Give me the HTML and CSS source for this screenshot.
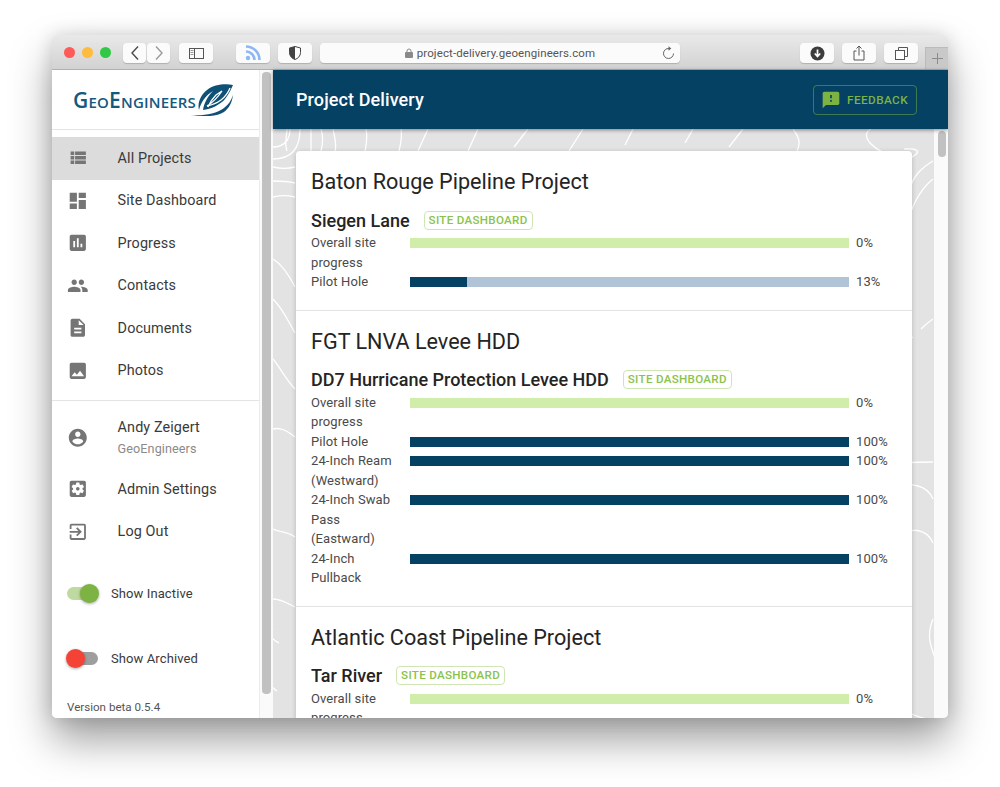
FILE: index.html
```html
<!DOCTYPE html>
<html lang="en">
<head>
    <meta charset="UTF-8">
    <title>Project Delivery</title>
    <link rel="stylesheet" href="styles.css">
</head>
<body>

    <div class="window">
        <div class="toolbar">
            <div class="lights">
                <span class="light red"></span>
                <span class="light yellow"></span>
                <span class="light green"></span>
            </div>
            <div class="tb-btn nav-btn"><svg width="10" height="16" viewBox="0 0 10 16"><path d="M8 1.5L2 8l6 6.5" fill="none" stroke="#4a4a4a" stroke-width="1.4"/></svg></div>
            <div class="tb-btn nav-btn next"><svg width="10" height="16" viewBox="0 0 10 16"><path d="M2 1.5L8 8l-6 6.5" fill="none" stroke="#9a9a9a" stroke-width="1.4"/></svg></div>
            <div class="tb-btn wide sidebar-btn"><svg width="15" height="11" viewBox="0 0 15 11"><rect x=".5" y=".5" width="14" height="10" fill="none" stroke="#555"/><path d="M5.5 0v11" stroke="#555"/><path d="M1.5 2.5h3M1.5 4.5h3M1.5 6.5h3" stroke="#999"/></svg></div>
            <div class="tb-btn wide rss-btn"><svg width="16" height="16" viewBox="0 0 16 16"><circle cx="3" cy="13" r="2.2" fill="#8db8f5"/><path d="M1 6.5a8.5 8.5 0 0 1 8.500 8.500M1 1.500a13.500 13.500 0 0 1 13.500 13.500" fill="none" stroke="#8db8f5" stroke-width="2.600"/></svg></div>
            <div class="tb-btn wide shield-btn"><svg width="12" height="14" viewBox="0 0 12 14"><path d="M6 .5l5.500 1.500v4.500c0 3.500-2.500 6-5.500 7-3-1-5.500-3.500-5.500-7V2z" fill="#fff" stroke="#444"/><path d="M6 .5L.5 2v4.500c0 3.500 2.500 6 5.500 7z" fill="#444"/></svg></div>
            <div class="url-bar">
                <span class="url-text"><svg width="8" height="10" viewBox="0 0 8 10"><path d="M2 4.500V3a2 2 0 0 1 4 0v1.500" fill="none" stroke="#8a8a8a"/><rect y="4" width="8" height="6" rx="1" fill="#8a8a8a"/></svg> project-delivery.geoengineers.com</span>
                <svg class="reload" width="13" height="14" viewBox="0 0 13 14"><path d="M7 2.500A5 5 0 1 0 11.500 7.500" fill="none" stroke="#666"/><path d="M6.500 .3L9.300 2.500 6.500 4.700z" fill="#666"/></svg>
            </div>
            <div class="tb-btn wide download-btn"><svg width="15" height="15" viewBox="0 0 15 15"><circle cx="7.500" cy="7.500" r="7" fill="#3c3c3c"/><path d="M7.500 3.500v6M4.800 7.500l2.700 3 2.700-3" fill="none" stroke="#fff" stroke-width="1.700"/></svg></div>
            <div class="tb-btn wide"><svg width="12" height="16" viewBox="0 0 12 16"><path d="M3.500 6H1v9h10V6H8.500M6 10.500V1M3.500 3.500L6 1l2.500 2.500" fill="none" stroke="#555"/></svg></div>
            <div class="tb-btn wide"><svg width="13" height="13" viewBox="0 0 13 13"><rect x=".5" y="3.500" width="9" height="9" fill="#fff" stroke="#555"/><path d="M3.500 3.500v-3h9v9h-3" fill="none" stroke="#555"/></svg></div>
            <div class="new-tab"><svg width="11" height="11" viewBox="0 0 11 11"><path d="M5.500 0v11M0 5.500h11" stroke="#8c8c8c"/></svg></div>
        </div>

        <div class="app">
            <aside class="sidebar">
                <div class="logo">
                    <span class="logo-text">GeoEngineers</span>
                    <svg class="logo-leaf" width="46" height="32" viewBox="0 0 46 32">
                        <path d="M43 1C35-.5 24 .5 17 6 9.500 12 7.500 20 9 26c2-8 7-15 14-19-5 5-9 12-10 19 8-1 17-5 22-11 4-5 6-10 8-14z" fill="#0f5176"/>
                        <path d="M40 4c-2 5-5 9-9 12-4 3-9 5-14 6 5-3 11-9 15-15l-6 4c-3 3-6 7-8 12" fill="none" stroke="#fff" stroke-width="1.300"/>
                        <path d="M0 31c14 1 26-1 34-7 4-3 7-7 9-13-1 8-4 13-9 17-8 5-22 5-34 3z" fill="#0f5176"/>
                    </svg>
                </div>
                <ul class="menu first">
                    <li class="menu-item active"><svg class="icon" viewBox="0 0 24 24"><path d="M4 14h4v-4H4v4zm0 5h4v-4H4v4zM4 9h4V5H4v4zm5 5h12v-4H9v4zm0 5h12v-4H9v4zM9 5v4h12V5H9z"/></svg>All Projects</li>
                    <li class="menu-item"><svg class="icon" viewBox="0 0 24 24"><path d="M3 13h8V3H3v10zm0 8h8v-6H3v6zm10 0h8V11h-8v10zm0-18v6h8V3h-8z"/></svg>Site Dashboard</li>
                    <li class="menu-item"><svg class="icon" viewBox="0 0 24 24"><path d="M19 3H5c-1.100 0-2 .9-2 2v14c0 1.100.9 2 2 2h14c1.100 0 2-.9 2-2V5c0-1.100-.9-2-2-2zM9 17H7v-7h2v7zm4 0h-2V7h2v10zm4 0h-2v-4h2v4z"/></svg>Progress</li>
                    <li class="menu-item"><svg class="icon" viewBox="0 0 24 24"><path d="M16 11c1.660 0 2.990-1.340 2.990-3S17.660 5 16 5c-1.660 0-3 1.340-3 3s1.340 3 3 3zm-8 0c1.660 0 2.990-1.340 2.990-3S9.660 5 8 5C6.340 5 5 6.340 5 8s1.340 3 3 3zm0 2c-2.330 0-7 1.170-7 3.500V19h14v-2.500c0-2.330-4.670-3.500-7-3.500zm8 0c-.29 0-.62.02-.97.05 1.160.84 1.970 1.970 1.970 3.450V19h6v-2.500c0-2.330-4.670-3.500-7-3.500z"/></svg>Contacts</li>
                    <li class="menu-item"><svg class="icon" viewBox="0 0 24 24"><path d="M14 2H6c-1.100 0-1.990.9-1.990 2L4 20c0 1.100.89 2 1.990 2H18c1.100 0 2-.9 2-2V8l-6-6zm2 16H8v-2h8v2zm0-4H8v-2h8v2zm-3-5V3.500L18.500 9H13z"/></svg>Documents</li>
                    <li class="menu-item"><svg class="icon" viewBox="0 0 24 24"><path d="M21 19V5c0-1.100-.9-2-2-2H5c-1.100 0-2 .9-2 2v14c0 1.100.9 2 2 2h14c1.100 0 2-.9 2-2zM8.500 13.500l2.500 3.010L14.500 12l4.500 6H5l3.500-4.500z"/></svg>Photos</li>
                </ul>
                <ul class="menu second">
                    <li class="menu-item user"><svg class="icon" viewBox="0 0 24 24"><path d="M12 2C6.480 2 2 6.480 2 12s4.480 10 10 10 10-4.480 10-10S17.520 2 12 2zm0 3c1.660 0 3 1.340 3 3s-1.340 3-3 3-3-1.340-3-3 1.340-3 3-3zm0 14.200c-2.500 0-4.710-1.280-6-3.220.03-1.990 4-3.080 6-3.080 1.990 0 5.970 1.090 6 3.080-1.290 1.940-3.500 3.220-6 3.220z"/></svg>
                        <div class="user-text">Andy Zeigert<span class="user-org">GeoEngineers</span></div>
                    </li>
                    <li class="menu-item"><svg class="icon" viewBox="0 0 24 24"><path d="M12 10c-1.100 0-2 .9-2 2s.9 2 2 2 2-.9 2-2-.9-2-2-2zm7-7H5c-1.110 0-2 .9-2 2v14c0 1.100.89 2 2 2h14c1.110 0 2-.9 2-2V5c0-1.100-.89-2-2-2zm-1.750 9c0 .23-.02.46-.05.68l1.480 1.160c.13.11.17.3.08.45l-1.400 2.420c-.09.15-.27.21-.43.15l-1.740-.7c-.36.28-.76.51-1.180.69l-.26 1.850c-.03.17-.18.3-.35.3h-2.800c-.17 0-.32-.13-.35-.29l-.26-1.850c-.43-.18-.82-.41-1.180-.69l-1.740.7c-.16.06-.34 0-.43-.15l-1.400-2.420c-.09-.15-.05-.34.08-.45l1.480-1.160c-.03-.23-.05-.46-.05-.69 0-.23.02-.46.05-.68l-1.480-1.160c-.13-.11-.17-.3-.08-.45l1.400-2.420c.09-.15.27-.21.43-.15l1.740.7c.36-.28.76-.51 1.180-.69l.26-1.850c.03-.17.18-.3.35-.3h2.800c.17 0 .32.13.35.29l.26 1.850c.43.18.82.41 1.180.69l1.740-.7c.16-.06.34 0 .43.15l1.400 2.420c.09.15.05.34-.08.45l-1.480 1.160c.03.23.05.46.05.69z"/></svg>Admin Settings</li>
                    <li class="menu-item"><svg class="icon" viewBox="0 0 24 24"><path d="M10.090 15.590L11.500 17l5-5-5-5-1.410 1.410L12.670 11H3v2h9.670l-2.580 2.590zM19 3H5c-1.110 0-2 .9-2 2v4h2V5h14v14H5v-4H3v4c0 1.100.89 2 2 2h14c1.100 0 2-.9 2-2V5c0-1.100-.9-2-2-2z"/></svg>Log Out</li>
                </ul>
                <div class="switch-row">
                    <span class="switch on"><span class="thumb"></span></span>Show Inactive
                </div>
                <div class="switch-row">
                    <span class="switch off"><span class="thumb"></span></span>Show Archived
                </div>
                <div class="version">Version beta 0.5.4</div>
            </aside>

            <div class="side-scroll"><span class="side-thumb"></span></div>

            <main class="main">
                <header class="appbar">
                    <h1>Project Delivery</h1>
                    <div class="feedback">
                        <svg width="20" height="20" viewBox="0 0 24 24"><path d="M20 2H4c-1.100 0-1.990.9-1.990 2L2 22l4-4h14c1.100 0 2-.9 2-2V4c0-1.100-.9-2-2-2zm-7 12h-2v-2h2v2zm0-4h-2V6h2v4z" fill="#7cb342"/></svg>
                        FEEDBACK
                    </div>
                </header>
                <div class="content">
                    <svg class="topo" width="661" height="590" viewBox="0 0 661 590" fill="none" stroke="#fff" stroke-width="1.300">
                        <path d="M0 18C12 18 17 10 17 0M0 30c18 0 27-10 27-30M14 22c-3-8 0-16 0-22"/>
                        <path d="M38 0v22M48 0c2 6 2 14 0 22M60 0c2 10 4 16 2 22M93 0c2 8 0 14-1 24M128 0c1 6 0 14-2 22M155 0l-10 22M205 0l-10 22M255 0l-14 18M310 0l-14 22M360 0l-8 16M420 0l-8 14M470 0l-14 18M520 0c6 8 8 14 4 22"/>
                        <path d="M0 38c8 2 14 2 22 0M0 52c8 0 14 0 22 2M0 68c8-2 14-2 22 0M0 130c10 6 16 16 22 28M0 170c10 10 14 20 22 34M0 230c8 10 14 22 22 30M0 300c8-2 14 2 22 8M0 400c8 4 14 2 22 8M0 470c8 0 14 4 22 8"/>
                        <path d="M598 0c-12 6 0 22 30 30 10 2 30-12 3-10M660 32c-10 6-20 14-24 30M660 50c-10 8-18 20-24 38-4 8-10 20-20 30M660 190c-6 4-10 8-12 10M640 208c-6 4-14 6-22 8M618 335c14-2 28-2 42-2M618 360c20-8 36-4 42 10M618 410c20-14 36-10 42 4M660 490c-8 20 0 30 2 40M620 570c10 14 24 18 42 22"/>
                        <path d="M0 500c-4 6-2 10 6 14M0 550c-4 4-2 8 4 12"/>
                    </svg>
                    <div class="card">
                        <section class="project">
                            <h2>Baton Rouge Pipeline Project</h2>
                            <div class="site-head"><h3>Siegen Lane</h3><span class="badge">SITE DASHBOARD</span></div>
                            <div class="row"><span class="label">Overall site progress</span><div class="bar track-green"></div><span class="pct">0%</span></div>
                            <div class="row"><span class="label">Pilot Hole</span><div class="bar track-blue"><div class="fill" style="width: 13%"></div></div><span class="pct">13%</span></div>
                        </section>
                        <section class="project">
                            <h2>FGT LNVA Levee HDD</h2>
                            <div class="site-head"><h3>DD7 Hurricane Protection Levee HDD</h3><span class="badge">SITE DASHBOARD</span></div>
                            <div class="row"><span class="label">Overall site progress</span><div class="bar track-green"></div><span class="pct">0%</span></div>
                            <div class="row"><span class="label">Pilot Hole</span><div class="bar track-blue"><div class="fill" style="width: 100%"></div></div><span class="pct">100%</span></div>
                            <div class="row"><span class="label">24-Inch Ream (Westward)</span><div class="bar track-blue"><div class="fill" style="width: 100%"></div></div><span class="pct">100%</span></div>
                            <div class="row"><span class="label">24-Inch Swab Pass (Eastward)</span><div class="bar track-blue"><div class="fill" style="width: 100%"></div></div><span class="pct">100%</span></div>
                            <div class="row"><span class="label">24-Inch Pullback</span><div class="bar track-blue"><div class="fill" style="width: 100%"></div></div><span class="pct">100%</span></div>
                        </section>
                        <section class="project">
                            <h2>Atlantic Coast Pipeline Project</h2>
                            <div class="site-head"><h3>Tar River</h3><span class="badge">SITE DASHBOARD</span></div>
                            <div class="row"><span class="label">Overall site progress</span><div class="bar track-green"></div><span class="pct">0%</span></div>
                            <div class="row"><span class="label">Pilot Hole</span><div class="bar track-blue"><div class="fill" style="width: 61%"></div></div><span class="pct">61%</span></div>
                        </section>
                    </div>
                    <div class="main-scroll"><span class="main-thumb"></span></div>
                </div>
            </main>
        </div>
    </div>

</body>
</html>
```

FILE: styles.css
```css
* {
    box-sizing: border-box;
}

body {
    margin: 0;
    height: 787px;
    padding: 35px 52px 0;
    background-color: #fff;
    font-family: Roboto, "Liberation Sans", sans-serif;
    overflow: hidden;
}

.window {
    width: 896px;
    height: 683px;
    border-radius: 5px;
    overflow: hidden;
    display: flex;
    flex-direction: column;
    box-shadow: 0 22px 42px rgba(0, 0, 0, 0.38), 0 0 18px rgba(0, 0, 0, 0.14);
}

/* browser toolbar */
.toolbar {
    flex: none;
    height: 35px;
    display: flex;
    align-items: flex-start;
    padding: 8px 0 0 12px;
    position: relative;
    background: linear-gradient(#e9e9e9, #d2d2d2);
    border-bottom: 1px solid #b0b0b0;
}

.lights {
    display: flex;
    gap: 7px;
    margin-top: 4px;
    margin-right: 12px;
}

.light {
    width: 11px;
    height: 11px;
    border-radius: 50%;
}

.light.red { background-color: #fc5b57; }
.light.yellow { background-color: #fdbc40; }
.light.green { background-color: #33c748; }

.tb-btn {
    width: 23px;
    height: 20px;
    display: flex;
    align-items: center;
    justify-content: center;
    background-color: #fbfbfb;
    border-radius: 4px;
    box-shadow: 0 1px 1px rgba(0, 0, 0, 0.18);
}

.tb-btn.wide {
    width: 34px;
    margin-right: 8px;
}

.nav-btn.next {
    margin-left: 1px;
    margin-right: 9px;
}

.sidebar-btn.wide {
    margin-right: 23px;
}

.url-bar {
    width: 360px;
    height: 20px;
    margin-right: 120px;
    position: relative;
    text-align: center;
    font-size: 11.5px;
    line-height: 20px;
    letter-spacing: 0.1px;
    color: #555;
    background-color: #fbfbfb;
    border-radius: 4px;
    box-shadow: 0 1px 1px rgba(0, 0, 0, 0.18);
}

.url-text svg {
    vertical-align: -1px;
    margin-right: 1px;
}

.reload {
    position: absolute;
    right: 5px;
    top: 3px;
}

.new-tab {
    position: absolute;
    right: 0;
    bottom: 0;
    width: 23px;
    height: 22px;
    display: flex;
    align-items: center;
    justify-content: center;
    background-color: #c9c9c9;
    border-left: 1px solid #bbb;
    border-top: 1px solid #bbb;
}

/* app layout */
.app {
    flex: 1;
    min-height: 0;
    display: flex;
    background-color: #fff;
}

.sidebar {
    flex: none;
    width: 207px;
    background-color: #fff;
    color: #3a3a3a;
}

.logo {
    height: 60px;
    display: flex;
    align-items: center;
    padding-left: 21px;
    border-bottom: 1px solid #e4e4e4;
    position: relative;
}

.logo-text {
    font-family: "Open Sans", sans-serif;
    font-variant: small-caps;
    font-size: 21px;
    font-weight: 600;
    letter-spacing: 0.2px;
    color: #14597f;
}

.logo-leaf {
    margin-left: -6px;
}

.menu {
    list-style: none;
    margin: 0;
    padding: 7px 0 8px;
}

.menu.first {
    border-bottom: 1px solid #e4e4e4;
}

.menu-item {
    height: 42.5px;
    display: flex;
    align-items: center;
    padding-left: 15px;
    font-size: 14.4px;
    letter-spacing: 0.1px;
}

.menu-item.active {
    background-color: #dcdcdc;
}

.menu-item.user {
    height: 60px;
}

.icon {
    flex: none;
    width: 21.6px;
    height: 21.6px;
    margin-right: 29px;
    fill: #757575;
}

.user-text {
    line-height: 21px;
}

.user-org {
    display: block;
    font-size: 12.6px;
    color: #8a8a8a;
}

.switch-row {
    height: 65px;
    display: flex;
    align-items: center;
    padding-left: 15px;
    font-size: 13px;
    letter-spacing: 0.1px;
}

.switch {
    width: 31px;
    height: 13px;
    margin-right: 13px;
    border-radius: 7px;
    position: relative;
}

.switch.on { background-color: #bedaa1; }
.switch.off { background-color: #9e9e9e; }

.thumb {
    position: absolute;
    top: -3px;
    width: 19px;
    height: 19px;
    border-radius: 50%;
    box-shadow: 0 1px 3px rgba(0, 0, 0, 0.35);
}

.switch.on .thumb {
    right: -1px;
    background-color: #7cb342;
}

.switch.off .thumb {
    left: -1px;
    background-color: #f44336;
}

.version {
    margin-top: 9px;
    padding-left: 15px;
    font-size: 11.6px;
    color: #555;
}

.side-scroll {
    flex: none;
    width: 14px;
    background-color: #fafafa;
    border-left: 1px solid #ececec;
    padding: 2px 2px 0 2px;
}

.side-thumb {
    display: block;
    height: 622px;
    border-radius: 4px;
    background-color: #c1c1c1;
}

.main {
    flex: 1;
    min-width: 0;
    display: flex;
    flex-direction: column;
}

.appbar {
    flex: none;
    height: 59px;
    display: flex;
    align-items: center;
    justify-content: space-between;
    padding: 0 31px 0 23px;
    background-color: #044163;
    position: relative;
    z-index: 1;
    box-shadow: 0 1px 4px rgba(0, 0, 0, 0.45);
}

.appbar h1 {
    margin: 0;
    font-size: 18px;
    font-weight: 500;
    letter-spacing: 0.1px;
    color: #fff;
}

.feedback {
    width: 104px;
    height: 30px;
    display: flex;
    align-items: center;
    gap: 6px;
    padding-left: 7px;
    font-size: 11.8px;
    font-weight: 500;
    letter-spacing: 0.4px;
    color: #7cb342;
    border: 1px solid rgba(124, 179, 66, 0.5);
    border-radius: 4px;
}

.content {
    flex: 1;
    min-height: 0;
    padding: 22px 36px 0 23px;
    position: relative;
    overflow: hidden;
    background-color: #e3e3e3;
}

.topo {
    position: absolute;
    left: 0;
    top: 0;
}

.card {
    position: relative;
    background-color: #fff;
    border-radius: 4px;
    box-shadow: 0 1px 5px rgba(0, 0, 0, 0.2);
}

.project {
    padding: 15px 15px 18px;
    border-bottom: 1px solid #e4e4e4;
}

.project h2 {
    margin: 0 0 12px;
    font-size: 21.6px;
    line-height: 32px;
    font-weight: 400;
    color: #242424;
}

.site-head {
    display: flex;
    align-items: center;
    height: 20px;
    margin-bottom: 3px;
}

.site-head h3 {
    margin: 0 14px 0 0;
    font-size: 18px;
    font-weight: 500;
    color: #242424;
}

.badge {
    height: 19px;
    padding: 0 4px;
    font-size: 11.6px;
    line-height: 17px;
    font-weight: 500;
    letter-spacing: 0.3px;
    color: #8bc34a;
    border: 1px solid #cfe6b4;
    border-radius: 4px;
}

.row {
    display: flex;
    align-items: flex-start;
    font-size: 13px;
    line-height: 19.5px;
    letter-spacing: 0.1px;
    color: #4a4a4a;
}

.label {
    width: 99px;
    flex: none;
    padding-right: 4px;
}

.bar {
    width: 439px;
    flex: none;
    height: 10px;
    margin-top: 5px;
    margin-right: 7px;
}

.track-green { background-color: #d0eea9; }
.track-blue { background-color: #b1c3d6; }

.fill {
    height: 100%;
    background-color: #044163;
}

.main-scroll {
    position: absolute;
    top: 0;
    right: 0;
    bottom: 0;
    width: 14px;
    padding: 2px 2px 0 4px;
    background-color: #fafafa;
}

.main-thumb {
    display: block;
    height: 26px;
    border-radius: 4px;
    background-color: #c1c1c1;
}
```
